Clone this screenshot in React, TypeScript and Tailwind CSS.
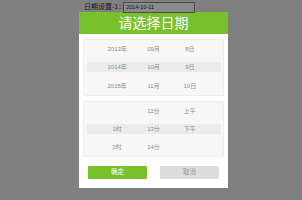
import React from 'react';

const dateRows = [
  { y: '2013年', m: '09月', d: '8日', active: false },
  { y: '2014年', m: '10月', d: '9日', active: true },
  { y: '2015年', m: '11月', d: '10日', active: false },
];

const timeRows = [
  { h: '', min: '12分', ap: '上午', active: false },
  { h: '1时', min: '13分', ap: '下午', active: true },
  { h: '2时', min: '14分', ap: '', active: false },
];

const font = { fontFamily: '"Liberation Sans", "Noto Sans CJK SC", sans-serif' };

const Row: React.FC<{ cells: string[]; active: boolean }> = ({ cells, active }) => (
  <div className="h-[19px] relative flex items-center">
    {active && <div className="absolute left-[3px] right-[2px] top-[4px] h-[10px] bg-[#ebebeb]" />}
    <div className="relative grid grid-cols-3 w-full pl-[15px] pr-[15px]">
      {cells.map((c, i) => (
        <span key={i} className="text-center text-[6px] leading-none text-[#8c8c8c]">
          {c}
        </span>
      ))}
    </div>
  </div>
);

export default function App() {
  return (
    <div className="w-[302px] h-[200px] bg-[#808080] overflow-hidden" style={font}>
      <div className="h-[12px] flex items-start pl-[84px] pt-[2px]">
        <span className="text-[7px] leading-[10px] text-[#1a1a1a]">日期设置-1：</span>
        <div className="-ml-[2px] w-[72px] h-[11px] border border-[#4a4a4a] bg-[#8a8a8a] flex items-center pl-[2px]">
          <span className="text-[5.5px] leading-none text-[#111]">2014-10-11</span>
        </div>
      </div>
      <div className="ml-[79px] w-[149px] bg-white">
        <div className="h-[22px] bg-[#78c12c] flex items-center justify-center">
          <span className="text-white text-[14px] leading-none">请选择日期</span>
        </div>
        <div className="px-[4px] pt-[5px] pb-[9px]">
          <div className="bg-[#f7f7f7] border border-[#ededed] rounded-[1px] h-[57px] flex flex-col justify-center">
            {dateRows.map((r, i) => (
              <Row key={i} cells={[r.y, r.m, r.d]} active={r.active} />
            ))}
          </div>
          <div className="mt-[5px] bg-[#f7f7f7] border border-[#ededed] rounded-[1px] h-[56px] flex flex-col justify-center">
            {timeRows.map((r, i) => (
              <Row key={i} cells={[r.h, r.min, r.ap]} active={r.active} />
            ))}
          </div>
          <div className="mt-[9px] flex justify-between px-[5px]">
            <button className="w-[59px] h-[13px] bg-[#78c12c] text-white text-[6.5px] leading-none rounded-[1px]">确定</button>
            <button className="w-[59px] h-[13px] bg-[#dcdcdc] text-[#9a9a9a] text-[6.5px] leading-none rounded-[1px]">取消</button>
          </div>
        </div>
      </div>
    </div>
  );
}
